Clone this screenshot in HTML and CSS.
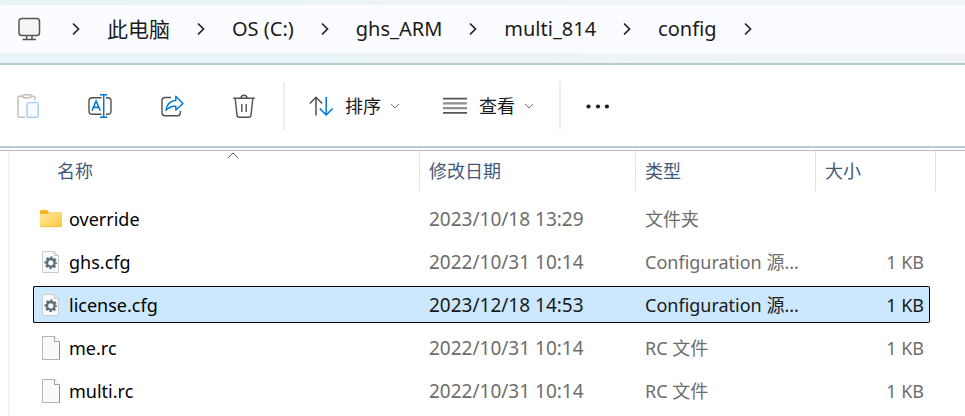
FILE: index.html
```html
<!DOCTYPE html>
<html lang="zh-CN">
<head>
    <meta charset="UTF-8">
    <meta name="viewport" content="width=device-width, initial-scale=1.0">
    <title>config</title>
    <link rel="stylesheet" href="styles.css">
</head>
<body>

    <!-- shared icons -->
    <svg class="sprite" aria-hidden="true">
        <symbol id="chevron-right" viewBox="0 0 8 14">
            <path d="M1 1.5L6.5 7L1 12.5" fill="none" stroke="#222" stroke-width="1.7"/>
        </symbol>
        <symbol id="chevron-down" viewBox="0 0 12 12">
            <path d="M2 4L6 8L10 4" fill="none" stroke="#777" stroke-width="1"/>
        </symbol>
        <symbol id="file" viewBox="0 0 24 26">
            <path d="M2.5 1.5H14.5L19.5 6.5V24.5H2.5Z" fill="#fafafa" stroke="#b4b4b4"/>
            <path d="M19.5 7V24.5" fill="none" stroke="#8c8c8c"/>
            <path d="M14.5 1.5V6.5H19.5" fill="#fff" stroke="#a0a0a0"/>
        </symbol>
        <symbol id="file-config" viewBox="0 0 24 26">
            <path d="M2.5 2.5H14.5L18.5 6.5V23.5H2.5Z" fill="#f7f9fa" stroke="#c9cdd0"/>
            <path d="M14.5 2.5V6.5H18.5" fill="#e6e8ea" stroke="#b9bdc0" stroke-width=".8"/>
            <circle cx="10.8" cy="13.8" r="5" fill="none" stroke="#5c6e7a" stroke-width="2.6" stroke-dasharray="2.2 1.727" stroke-dashoffset="1.1"/>
            <circle cx="10.8" cy="13.8" r="3.8" fill="none" stroke="#5c6e7a" stroke-width="2.4"/>
        </symbol>
    </svg>

    <header class="top">
        <nav class="address" aria-label="地址栏">
            <svg class="pc" viewBox="0 0 24 24" fill="none" stroke="#555" stroke-width="1.5">
                <rect x="2" y="1.5" width="20.5" height="17" rx="2.8" fill="#f4f5f6"/>
                <path d="M9.5 18.5V22M15 18.5V22M5.5 22.4H19"/>
            </svg>
            <svg class="sep"><use href="#chevron-right"/></svg>
            <a class="cjk" href="#">此电脑</a>
            <svg class="sep"><use href="#chevron-right"/></svg>
            <a href="#">OS (C:)</a>
            <svg class="sep"><use href="#chevron-right"/></svg>
            <a href="#">ghs_ARM</a>
            <svg class="sep"><use href="#chevron-right"/></svg>
            <a href="#">multi_814</a>
            <svg class="sep"><use href="#chevron-right"/></svg>
            <a href="#">config</a>
            <svg class="sep"><use href="#chevron-right"/></svg>
        </nav>
    </header>

    <div class="toolbar">
        <div class="actions">
            <button type="button" aria-label="粘贴" disabled>
                <svg viewBox="0 0 24 24" fill="none" stroke="#bdbdbd" stroke-width="1.4">
                    <path d="M7 2.2H3.5Q2 2.2 2 3.7V22Q2 23.3 3.5 23.3H9M15 2.2H17.3Q19 2.2 19 3.7V6"/>
                    <rect x="7" y=".8" width="8" height="3" rx="1.5"/>
                    <rect x="11" y="8.6" width="11.2" height="14.7" rx="1.6" fill="#f7fbff" stroke="#a3cdf3"/>
                </svg>
            </button>
            <button type="button" aria-label="重命名">
                <svg viewBox="0 0 24 24" fill="none" stroke="#505050" stroke-width="1.4">
                    <path d="M13.5 3.7H4.2Q1 3.7 1 7V17Q1 20.3 4.2 20.3H13.5M18 3.7H19.6Q23 3.7 23 7V17Q23 20.3 19.6 20.3H18"/>
                    <path d="M4 16.8L8.1 7L12.3 16.8M5.6 13.4H10.7" stroke="#0078d4" stroke-width="1.6"/>
                    <path d="M15.7 .8V23.2M12 .8H19.2M12 23.2H19.2" stroke="#0078d4" stroke-width="1.5"/>
                </svg>
            </button>
            <button type="button" aria-label="共享">
                <svg viewBox="0 0 24 24" fill="none" stroke="#505050" stroke-width="1.4" stroke-linejoin="round">
                    <path d="M11 3.5H5Q2 3.5 2 6.5V18.8Q2 21.8 5 21.8H17.4Q20.4 21.8 20.4 18.8V17"/>
                    <path d="M15.8 2.3L23 9.4L15.8 16V12.2Q9.6 11.9 6 16.3Q7 7.6 15.8 6.3Z" stroke="#0078d4"/>
                </svg>
            </button>
            <button type="button" aria-label="删除">
                <svg viewBox="0 0 24 24" fill="none" stroke="#505050" stroke-width="1.4">
                    <path d="M1.2 4.3H22.8M9 4Q9 1.2 12 1.2Q15 1.2 15 4M3.2 4.5L5 21.2Q5.2 23.2 7.2 23.2H16.8Q18.8 23.2 19 21.2L20.8 4.5M9.8 10V18M14.2 10V18"/>
                </svg>
            </button>
        </div>
        <div class="menus">
            <button type="button">
                <svg viewBox="0 0 24 24" fill="none" stroke="#505050" stroke-width="1.5">
                    <path d="M7 21.5V3.3M.8 9.5L7 3.3L13.2 9.5"/>
                    <path d="M17.2 3V21M10.8 14.6L17.2 21L23.6 14.6" stroke="#0078d4"/>
                </svg>
                <span>排序</span>
                <svg class="drop"><use href="#chevron-down"/></svg>
            </button>
            <button type="button">
                <svg viewBox="0 0 24 24" fill="none" stroke-width="1.6">
                    <path d="M0 4.6H24M0 18.9H24" stroke="#555"/>
                    <path d="M0 9.4H24M0 14.1H24" stroke="#8f8f8f" stroke-width="2.2"/>
                </svg>
                <span>查看</span>
                <svg class="drop"><use href="#chevron-down"/></svg>
            </button>
        </div>
        <button type="button" aria-label="更多">
            <svg viewBox="0 0 24 24" fill="#1a1a1a">
                <circle cx="3.5" cy="12.5" r="2.1"/>
                <circle cx="13" cy="12.5" r="2.1"/>
                <circle cx="21.9" cy="12.5" r="2.1"/>
            </svg>
        </button>
    </div>

    <main class="files">
        <table>
            <colgroup>
                <col>
                <col class="col-date">
                <col class="col-type">
                <col class="col-size">
            </colgroup>
            <thead>
                <tr>
                    <th class="name" aria-sort="ascending">
                        <button type="button">名称
                            <svg class="sort-mark" viewBox="0 0 12 7"><path d="M.8 6L6 1L11.2 6" fill="none" stroke="#555"/></svg>
                        </button>
                    </th>
                    <th><button type="button">修改日期</button></th>
                    <th><button type="button">类型</button></th>
                    <th class="last"><button type="button">大小</button></th>
                </tr>
            </thead>
            <tbody>
                <tr>
                    <td>
                        <div class="entry">
                            <svg viewBox="0 0 24 26">
                                <defs>
                                    <linearGradient id="folder" x1="0" y1="0" x2="1" y2="1">
                                        <stop offset="0" stop-color="#ffe9a6"/>
                                        <stop offset="1" stop-color="#fdc83c"/>
                                    </linearGradient>
                                </defs>
                                <path d="M0 5.5Q0 4 1.5 4H7L9 6H20.5Q22 6 22 7.5V10H0Z" fill="#f6b31b"/>
                                <path d="M0 9Q0 8 1 8H7L9.5 6H21Q22 6 22 7V20Q22 21 21 21H1Q0 21 0 20Z" fill="url(#folder)"/>
                                <path d="M.5 20.7H21.5" stroke="#edb43c" stroke-width=".7"/>
                            </svg>
                            override
                        </div>
                    </td>
                    <td class="date">2023/10/18 13:29</td>
                    <td>文件夹</td>
                    <td class="size"></td>
                </tr>
                <tr>
                    <td><div class="entry"><svg><use href="#file-config"/></svg>ghs.cfg</div></td>
                    <td class="date">2022/10/31 10:14</td>
                    <td>Configuration 源...</td>
                    <td class="size">1 KB</td>
                </tr>
                <tr class="selected">
                    <td><div class="entry"><svg><use href="#file-config"/></svg>license.cfg</div></td>
                    <td class="date">2023/12/18 14:53</td>
                    <td>Configuration 源...</td>
                    <td class="size">1 KB</td>
                </tr>
                <tr>
                    <td><div class="entry"><svg><use href="#file"/></svg>me.rc</div></td>
                    <td class="date">2022/10/31 10:14</td>
                    <td>RC 文件</td>
                    <td class="size">1 KB</td>
                </tr>
                <tr>
                    <td><div class="entry"><svg><use href="#file"/></svg>multi.rc</div></td>
                    <td class="date">2022/10/31 10:14</td>
                    <td>RC 文件</td>
                    <td class="size">1 KB</td>
                </tr>
            </tbody>
        </table>
    </main>

</body>
</html>
```
FILE: styles.css
```css
* {
    box-sizing: border-box;
}

body {
    margin: 0;
    min-height: 100vh;
    display: flex;
    flex-direction: column;
    font-family: "Noto Sans", "Noto Sans CJK SC", sans-serif;
    font-size: 18px;
    line-height: 24px;
    color: #1a1a1a;
    background-color: #fff;
}

button {
    display: flex;
    align-items: center;
    padding: 0;
    border: none;
    background: none;
    font: inherit;
    color: inherit;
}

svg {
    display: block;
    flex: none;
    width: 24px;
    height: 24px;
}

.sprite {
    position: absolute;
    width: 0;
    height: 0;
}

/* address bar */
.top {
    padding: 5px 0 10px;
    background: linear-gradient(to right, #e9f4f6, #f0f4f7);
    border-bottom: 2px solid #b7cdd5;
}

.address {
    display: flex;
    align-items: center;
    gap: 27px;
    height: 48px;
    padding-left: 17px;
    border-radius: 4px 0 0 4px;
    background-color: #fbfcff;
    font-size: 20px;
    white-space: nowrap;
}

.address a {
    color: inherit;
    text-decoration: none;
}

.address .cjk {
    font-size: 21px;
}

.address .pc {
    margin-right: 4px;
}

.address .sep {
    width: 8px;
    height: 14px;
}

/* toolbar */
.toolbar {
    display: flex;
    align-items: center;
    height: 83px;
    padding-left: 16px;
    border-bottom: 2px solid #b7cdd5;
}

.actions {
    display: flex;
    gap: 48px;
}

.menus {
    display: flex;
    gap: 42px;
    height: 48px;
    margin: 0 24px 0 27px;
    padding: 0 24px;
    border-left: 2px solid #ededed;
    border-right: 2px solid #ededed;
}

.menus span {
    margin: 0 8px 0 12px;
}

.drop {
    width: 12px;
    height: 12px;
}

/* file list */
.files {
    flex: 1;
    margin-top: 2px;
    padding: 0 35px 0 33px;
    border-top: 1px solid #bbb;
    background: linear-gradient(#f3f3f3, #f3f3f3) 8px 0 / 2px 100% no-repeat;
}

table {
    width: 100%;
    margin-top: -6px;
    table-layout: fixed;
    border-collapse: separate;
    border-spacing: 0 6px;
}

.col-date {
    width: 216px;
}

.col-type {
    width: 180px;
}

.col-size {
    width: 114px;
}

th {
    height: 43px;
    padding: 0;
    vertical-align: top;
    font-weight: normal;
    color: #44597a;
}

th button {
    width: 100%;
    height: 40px;
    padding-left: 9px;
    border-right: 1px solid #e2e2e2;
}

th.name button {
    position: relative;
    padding-left: 24px;
}

th.last button {
    width: calc(100% + 6px);
}

/* sits on the top edge of the sorted column */
.sort-mark {
    position: absolute;
    top: 1px;
    left: calc(50% + 1px);
    width: 12px;
    height: 7px;
}

td {
    height: 37px;
    padding: 0 0 0 9px;
    border: 1px solid transparent;
    border-width: 1px 0;
    color: #6d6d6d;
    white-space: nowrap;
}

td:first-child {
    padding-left: 6px;
    border-left-width: 1px;
    color: #000;
}

td:last-child {
    padding-right: 5px;
    border-right-width: 1px;
}

.entry {
    display: flex;
    align-items: center;
    gap: 5px;
}

.entry svg {
    height: 26px;
}

.date {
    font-size: 19px;
}

.size {
    text-align: right;
}

.selected td {
    border-color: #000;
    background-color: #cce8ff;
    color: #1a1a1a;
}

.selected td:first-child {
    border-radius: 2px 0 0 2px;
    color: #000;
}

.selected td:last-child {
    border-radius: 0 2px 2px 0;
}
```
